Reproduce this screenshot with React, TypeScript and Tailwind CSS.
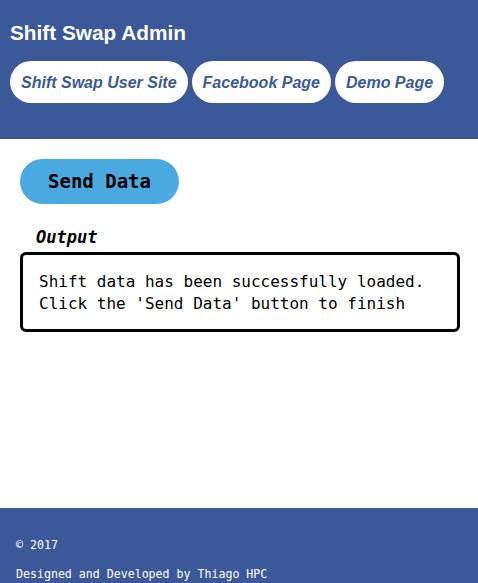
const links = ['Shift Swap User Site', 'Facebook Page', 'Demo Page'];

const App = () => {
  return (
    <div className="min-h-screen flex flex-col bg-white">
      <header className="bg-[#3b5998] h-[139px] px-[10px] pt-[21px]">
        <h1 className="text-white font-bold text-[20.8px] leading-6 font-['Liberation_Sans',Arial,sans-serif]">
          Shift Swap Admin
        </h1>
        <ul className="flex gap-1 mt-[16px]">
          {links.map((l) => (
            <li key={l} className="shrink-0">
              <a
                href="#"
                className="flex items-center h-[42px] px-[11px] pt-px bg-white rounded-[21px] text-[#3b5998] italic font-bold text-[16px] whitespace-nowrap font-['Liberation_Sans',Arial,sans-serif]"
              >
                {l}
              </a>
            </li>
          ))}
        </ul>
      </header>

      <main className="flex-1 px-5 pt-5 font-['DejaVu_Sans_Mono',monospace]">
        <button className="w-[159px] h-[45px] rounded-[23px] bg-[#4aa9e1] text-black font-bold text-[19px]">
          Send Data
        </button>
        <h2 className="mt-[21px] ml-4 italic font-bold text-[17px] leading-6">
          Output
        </h2>
        <div className="mt-[3px] w-[440px] h-[80px] border-[3px] border-black rounded-md px-4 pt-[16px] text-[16px] leading-[22px] text-black">
          Shift data has been successfully loaded.
          <br />
          Click the 'Send Data' button to finish
        </div>
      </main>

      <footer className="bg-[#3b5998] h-[75px] px-4 pt-[29px] text-white text-[11.6px] leading-4 font-['DejaVu_Sans_Mono',monospace]">
        <p>© 2017</p>
        <p className="mt-[13px]">Designed and Developed by Thiago HPC</p>
      </footer>
    </div>
  );
};

export default App;
